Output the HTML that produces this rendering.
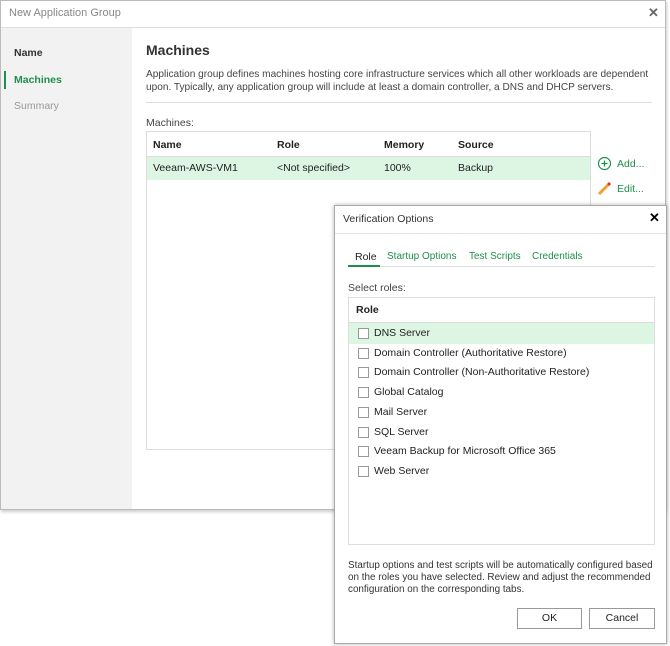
<!DOCTYPE html>
<html><head><meta charset="utf-8"><style>
*{margin:0;padding:0;box-sizing:border-box}
body{width:670px;height:646px;background:#fff;position:relative;font-family:"Liberation Sans",sans-serif;font-size:10.5px;color:#222;overflow:hidden}
.a{position:absolute;white-space:nowrap}
.g{color:#1e8f4a}
.cb{position:absolute;left:9px;width:11px;height:11px;border:1px solid #999;background:#fff}
</style></head><body>
<div class="a" style="left:0;top:0;width:666px;height:510px;border:1px solid #bbb;background:#fff;box-shadow:1px 2px 3px rgba(0,0,0,.2)"></div>
<div class="a" style="left:1px;top:27px;width:664px;height:1px;background:#ddd"></div>
<div class="a" style="left:9px;top:7px;color:#888;font-size:11px">New Application Group</div>
<div class="a" style="left:648px;top:5px;color:#666;font-size:13px;font-weight:bold">✕</div>
<div class="a" style="left:1px;top:28px;width:131px;height:481px;background:#f2f2f2"></div>
<div class="a" style="left:14px;top:47px;font-weight:bold;color:#333">Name</div>
<div class="a" style="left:4px;top:71px;width:2px;height:18px;background:#1e8f4a"></div>
<div class="a g" style="left:14px;top:74px;font-weight:bold">Machines</div>
<div class="a" style="left:14px;top:100px;color:#999">Summary</div>
<div class="a" style="left:146px;top:42px;font-size:14px;font-weight:bold;color:#333">Machines</div>
<div class="a" style="left:146px;top:68px;line-height:13px;color:#444;font-size:10.1px">Application group defines machines hosting core infrastructure services which all other workloads are dependent<br>upon. Typically, any application group will include at least a domain controller, a DNS and DHCP servers.</div>
<div class="a" style="left:146px;top:102px;width:506px;height:1px;background:#ddd"></div>
<div class="a" style="left:146px;top:117px;color:#444">Machines:</div>
<div class="a" style="left:146px;top:131px;width:445px;height:319px;border:1px solid #ddd"></div>
<div class="a" style="left:147px;top:156px;width:443px;height:1px;background:#ddd"></div>
<div class="a" style="left:153px;top:139px;font-weight:bold">Name</div>
<div class="a" style="left:277px;top:139px;font-weight:bold">Role</div>
<div class="a" style="left:384px;top:139px;font-weight:bold">Memory</div>
<div class="a" style="left:458px;top:139px;font-weight:bold">Source</div>
<div class="a" style="left:147px;top:157px;width:443px;height:23px;background:#ddf5e3"></div>
<div class="a" style="left:153px;top:162px">Veeam-AWS-VM1</div>
<div class="a" style="left:277px;top:162px">&lt;Not specified&gt;</div>
<div class="a" style="left:384px;top:162px">100%</div>
<div class="a" style="left:458px;top:162px">Backup</div>
<svg class="a" style="left:597px;top:156px" width="15" height="15"><circle cx="7.5" cy="7.5" r="6" fill="none" stroke="#1e8f4a" stroke-width="1.2"/><path d="M7.5 4.5v6M4.5 7.5h6" stroke="#1e8f4a" stroke-width="1.2"/></svg>
<div class="a g" style="left:617px;top:158px">Add...</div>
<svg class="a" style="left:597px;top:181px" width="15" height="15"><path d="M2 13L11 4" stroke="#f0a030" stroke-width="3"/><path d="M11 4l2-2" stroke="#d33" stroke-width="3"/></svg>
<div class="a g" style="left:617px;top:183px">Edit...</div>

<div class="a" style="left:334px;top:205px;width:333px;height:439px;background:#fff;border:1px solid #aaa;box-shadow:0 0 4px rgba(0,0,0,.3)"></div>
<div class="a" style="left:335px;top:233px;width:331px;height:1px;background:#e4e4e4"></div>
<div class="a" style="left:343px;top:213px;color:#333">Verification Options</div>
<div class="a" style="left:649px;top:210px;font-size:13px;font-weight:bold;color:#000">✕</div>
<div class="a" style="left:355px;top:251px">Role</div>
<div class="a g" style="left:387px;top:251px;font-size:10px">Startup Options</div>
<div class="a g" style="left:469px;top:251px;font-size:10px">Test Scripts</div>
<div class="a g" style="left:532px;top:251px;font-size:10px">Credentials</div>
<div class="a" style="left:348px;top:266px;width:307px;height:1px;background:#ddd"></div>
<div class="a" style="left:348px;top:265px;width:32px;height:2px;background:#1e8f4a"></div>
<div class="a" style="left:348px;top:282px;color:#444">Select roles:</div>
<div class="a" style="left:348px;top:297px;width:307px;height:248px;border:1px solid #ddd">
<div class="a" style="left:7px;top:6px;font-weight:bold">Role</div>
<div class="a" style="left:0;top:24px;width:305px;height:1px;background:#ddd"></div>
<div class="a" style="left:0;top:25px;width:305px;height:21px;background:#ddf5e3"></div>
<div class="a" style="left:0;top:26px;width:305px;line-height:19.7px">
<div style="position:relative;padding-left:25px">DNS Server<span class="cb" style="top:4px"></span></div>
<div style="position:relative;padding-left:25px">Domain Controller (Authoritative Restore)<span class="cb" style="top:4px"></span></div>
<div style="position:relative;padding-left:25px">Domain Controller (Non-Authoritative Restore)<span class="cb" style="top:4px"></span></div>
<div style="position:relative;padding-left:25px">Global Catalog<span class="cb" style="top:4px"></span></div>
<div style="position:relative;padding-left:25px">Mail Server<span class="cb" style="top:4px"></span></div>
<div style="position:relative;padding-left:25px">SQL Server<span class="cb" style="top:4px"></span></div>
<div style="position:relative;padding-left:25px">Veeam Backup for Microsoft Office 365<span class="cb" style="top:4px"></span></div>
<div style="position:relative;padding-left:25px">Web Server<span class="cb" style="top:4px"></span></div>
</div></div>
<div class="a" style="left:348px;top:560px;line-height:12px;font-size:9.9px;color:#333">Startup options and test scripts will be automatically configured based<br>on the roles you have selected. Review and adjust the recommended<br>configuration on the corresponding tabs.</div>
<div class="a" style="left:517px;top:608px;width:65px;height:21px;border:1px solid #999;text-align:center;line-height:19px">OK</div>
<div class="a" style="left:589px;top:608px;width:66px;height:21px;border:1px solid #999;text-align:center;line-height:19px">Cancel</div>
</body></html>
